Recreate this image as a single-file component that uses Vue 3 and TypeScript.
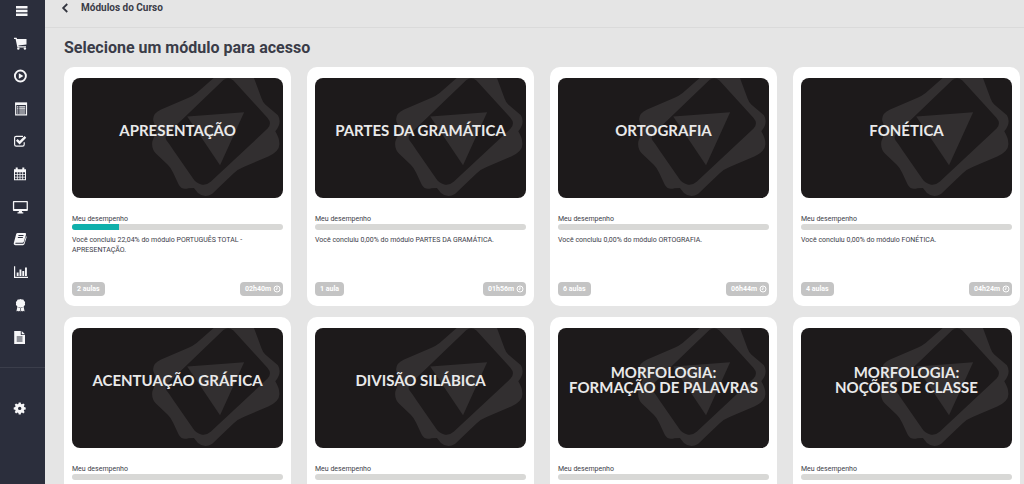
<script setup lang="ts">
interface Module {
  title: string[]
  course: string
  progress: number
  lessons: string
  duration: string
}

const menu: string[] = [
  'Menu', 'Loja', 'Aulas', 'Lista', 'Exercícios', 'Calendário',
  'Ao vivo', 'Apostilas', 'Relatórios', 'Certificados', 'Documentos',
]

const modules: Module[] = [
  { title: ['APRESENTAÇÃO'], course: 'PORTUGUÊS TOTAL - APRESENTAÇÃO', progress: 22.04, lessons: '2 aulas', duration: '02h40m' },
  { title: ['PARTES DA GRAMÁTICA'], course: 'PARTES DA GRAMÁTICA', progress: 0, lessons: '1 aula', duration: '01h56m' },
  { title: ['ORTOGRAFIA'], course: 'ORTOGRAFIA', progress: 0, lessons: '6 aulas', duration: '06h44m' },
  { title: ['FONÉTICA'], course: 'FONÉTICA', progress: 0, lessons: '4 aulas', duration: '04h24m' },
  { title: ['ACENTUAÇÃO GRÁFICA'], course: 'ACENTUAÇÃO GRÁFICA', progress: 0, lessons: '', duration: '' },
  { title: ['DIVISÃO SILÁBICA'], course: 'DIVISÃO SILÁBICA', progress: 0, lessons: '', duration: '' },
  { title: ['MORFOLOGIA:', 'FORMAÇÃO DE PALAVRAS'], course: 'FORMAÇÃO DE PALAVRAS', progress: 0, lessons: '', duration: '' },
  { title: ['MORFOLOGIA:', 'NOÇÕES DE CLASSE'], course: 'NOÇÕES DE CLASSE', progress: 0, lessons: '', duration: '' },
]

const percent = (value: number): string => value.toFixed(2).replace('.', ',') + '%'
</script>

<template>
  <div class="page">
    <nav class="sidebar" aria-label="Principal">
      <ul class="menu">
        <li v-for="(name, i) in menu" :key="name">
          <a href="#" class="item" :aria-label="name">
            <svg class="icon" viewBox="0 0 16 16" aria-hidden="true">
              <path v-if="i === 0" d="M4 3h11.500v2.500H4zM4 6.800h11.500v2.500H4zM4 10.600h11.500v2.500H4z" />
              <g v-else-if="i === 1">
                <path d="M2 1.700h2.600l.5 1.300h9.400v5.400L6.400 9.400l.2.900H14v1.200H5.400L3.600 3H2z" />
                <circle cx="6.300" cy="12.600" r="1.200" /><circle cx="12.900" cy="12.600" r="1.200" />
              </g>
              <g v-else-if="i === 2">
                <circle cx="8.400" cy="8" r="5.500" class="line thick" />
                <path d="M6.800 5.200 11.400 8l-4.600 2.800z" />
              </g>
              <g v-else-if="i === 3">
                <path d="M3.700 2.200h10.800v11.600H3.700z" class="line" />
                <path d="M3.200 1.700h11.800v2.200H3.200zM5 5.200h1.400v1.200H5zM7.200 5.200h6v1.200h-6zM5 7.300h1.400v1.200H5zM7.200 7.300h6v1.200h-6zM5 9.400h1.400v1.200H5zM7.200 9.400h6v1.200h-6zM5 11.400h1.400v1.200H5zM7.200 11.400h6v1.200h-6z" />
              </g>
              <g v-else-if="i === 4">
                <path d="M12.200 9.200v2.300a1.700 1.700 0 0 1-1.700 1.700H4.300a1.700 1.700 0 0 1-1.700-1.700V5a1.700 1.700 0 0 1 1.700-1.700h6.700" class="line" />
                <path d="m4.800 6.900 2.800 2.800 5.800-5.800" class="line heavy" />
              </g>
              <path v-else-if="i === 5" fill-rule="evenodd" d="M2 3.200h1.700V1.500h2v1.700h4.600V1.500h2v1.700H14v11H2zM3 6.200v1.900h1.900V6.200zm2.700 0v1.900h1.900V6.200zm2.700 0v1.900h1.900V6.200zm2.700 0v1.900H13V6.200zM3 8.800v1.900h1.900V8.800zm2.700 0v1.900h1.900V8.800zm2.700 0v1.900h1.900V8.800zm2.700 0v1.900H13V8.800zM3 11.400v1.900h1.900v-1.900zm2.700 0v1.900h1.900v-1.900zm2.700 0v1.900h1.900v-1.900zm2.700 0v1.900H13v-1.900z" />
              <path v-else-if="i === 6" fill-rule="evenodd" d="M1.800 1.900h13.200a.9.900 0 0 1 .9.900v8.300a.9.900 0 0 1-.9.900H9.900l.2 1.300h1.200v1.100H5.500v-1.100h1.200l.2-1.300H1.800a.9.900 0 0 1-.9-.9V2.800a.9.900 0 0 1 .9-.9zm.4 1.300v6.900h12.400V3.200z" />
              <path v-else-if="i === 7" fill-rule="evenodd" d="M5.600 2h7.200c1 0 1.500.7 1.200 1.600l-2.200 7.200c-.2.700-.7 1-1.400 1H3.700c-.7 0-.7 1 .2 1h7c.5 0 .9-.3 1.100-.8l2-6.800c.6.300.7.800.5 1.400l-2 6.500c-.3.700-.8 1.100-1.500 1.100H3.600c-1.400 0-2.200-1.100-1.800-2.300L4.200 3.100C4.400 2.400 4.900 2 5.600 2zm1 2.100-.3.900h5l.3-.9zM6 6l-.3.900h5L11 6z" />
              <path v-else-if="i === 8" d="M2 2.200h1.200v10.600h13V14H2zM4.700 8.400h1.900v3.700H4.700zM7.500 5.600h1.900v6.500H7.500zM10.300 6.900h1.900v5.200h-1.900zM13 3.500h1.900v8.600H13z" />
              <g v-else-if="i === 9" transform="translate(0 2)">
                <path d="m8.500 1 1.300.5 1.500.1.800 1.300 1 1.100-.2 1.400.2 1.400-1 1.100-.8 1.300-1.500.1-1.300.5-1.300-.5-1.500-.1-.8-1.300-1-1.100.2-1.400-.2-1.400 1-1.100.8-1.300 1.500-.1z" />
                <path d="m5.300 9 2.900 1v3.600l-1.100-.9-.9.900-.9-.9-.9.900zM11.700 9l-2.900 1v3.600l1.100-.9.900.9.900-.9.900.9z" />
              </g>
              <path v-else fill-rule="evenodd" d="M2.200 1.900h6.600v4.200H13v8.800H2.200zM9.700 1.900 13 5.200H9.700zM4.700 7.400v1h5.800v-1zm0 2.100v1h5.800v-1zm0 2.100v1h5.800v-1z" />
            </svg>
          </a>
        </li>
      </ul>
      <div class="settings">
        <a href="#" class="item" aria-label="Configurações">
          <svg class="icon" viewBox="0 0 16 16" aria-hidden="true">
            <path fill-rule="evenodd" d="M6.700 2.400h2l.3 1.500 1 .4 1.300-.9 1.400 1.400-.9 1.300.4 1 1.500.3v2l-1.500.3-.4 1 .9 1.300-1.400 1.400-1.300-.9-1 .4-.3 1.500h-2l-.3-1.500-1-.4-1.300.9L2.700 12l.9-1.300-.4-1-1.500-.3v-2l1.500-.3.4-1-.9-1.300 1.400-1.400 1.300.9 1-.4zM7.700 6.700a1.700 1.700 0 1 0 0 3.400 1.700 1.700 0 0 0 0-3.400z" />
          </svg>
        </a>
      </div>
    </nav>

    <div class="content">
      <header class="topbar">
        <button type="button" class="back" aria-label="Voltar">
          <svg viewBox="0 0 6 8" aria-hidden="true"><path d="M4.800.8 1.500 4l3.300 3.200" /></svg>
        </button>
        <span class="crumb">Módulos do Curso</span>
      </header>

      <main class="main">
        <h1 class="heading">Selecione um módulo para acesso</h1>
        <div class="grid">
          <article v-for="m in modules" :key="m.course" class="card">
            <a href="#" class="cover">
              <svg class="emblem" viewBox="0 0 630 360" preserveAspectRatio="xMaxYMid slice" aria-hidden="true">
                <path
                  fill-rule="evenodd"
                  d="M424 0 372 46Q362 54 348 60L266 95Q238 108 243 130L253 157 240 190Q236 212 252 228L286 260Q296 270 302 284L318 318Q327 337 348 330L364 329 376 344Q396 361 418 347L482 286Q496 273 514 266L586 235Q622 219 619 195Q619 180 607 160Q628 135 615 112L577 80Q570 73 566 62L543 0ZM452 7 284 168Q276 177 282 187Q292 200 304 218L362 302Q370 315 386 319Q402 322 414 311L584 152Q598 136 584 120L482 8Q466 -4 452 7Z"
                />
                <path d="M344 116 514 103 442 261Z" />
              </svg>
              <span class="cover-title">
                <template v-for="(line, n) in m.title" :key="line"><br v-if="n > 0" />{{ line }}</template>
              </span>
            </a>
            <div class="performance">
              <p class="text">Meu desempenho</p>
              <div class="track" role="progressbar" :aria-valuenow="m.progress" aria-valuemin="0" aria-valuemax="100" aria-label="Meu desempenho">
                <div class="fill" :style="{ width: m.progress + '%' }"></div>
              </div>
              <p v-if="m.lessons" class="text">Você concluiu {{ percent(m.progress) }} do módulo {{ m.course }}.</p>
            </div>
            <footer v-if="m.lessons" class="badges">
              <span class="badge">{{ m.lessons }}</span>
              <span class="badge time">{{ m.duration }}
                <svg viewBox="0 0 8 8" aria-hidden="true"><circle cx="4" cy="4" r="3" /><path d="M4 2.200V4.300H2.700" /></svg>
              </span>
            </footer>
          </article>
        </div>
      </main>
    </div>
  </div>
</template>

<style>
body {
  margin: 0;
  background: #e5e5e5;
}
</style>

<style scoped>
.page {
  display: flex;
  height: 100vh;
  overflow: hidden;
  background: #e5e5e5;
  color: #3a3c48;
  font-family: Roboto, "Liberation Sans", sans-serif;
}

.sidebar {
  flex: none;
  width: 45px;
  box-sizing: border-box;
  padding-top: 3px;
  background: #2b2e3c;
}

.menu {
  display: flex;
  flex-direction: column;
  justify-content: space-between;
  height: 342px;
  margin: 0;
  padding: 0;
  list-style: none;
}

.item {
  display: block;
  width: 16px;
  height: 16px;
  margin-left: 12px;
}

.icon {
  display: block;
  width: 16px;
  height: 16px;
  fill: #f6f6f8;
}

.line {
  fill: none;
  stroke: #f6f6f8;
  stroke-width: 1.2;
}

.thick {
  stroke-width: 1.9;
}

.heavy {
  stroke-width: 2.4;
}

.settings {
  margin-top: 22px;
  padding-top: 32px;
  border-top: 1px solid #3b3e4b;
}

.content {
  flex: 1;
  min-width: 0;
}

.topbar {
  display: flex;
  align-items: center;
  gap: 12px;
  height: 14px;
  padding: 1px 16px 12px;
  border-bottom: 1px solid #dadada;
}

.back {
  display: flex;
  padding: 0;
  border: 0;
  background: none;
}

.back svg {
  width: 8px;
  height: 10px;
  fill: none;
  stroke: #33353f;
  stroke-width: 1.4;
}

.crumb {
  font-size: 10px;
  font-weight: 700;
  line-height: 14px;
}

.main {
  padding: 11px 4px 0 19px;
}

.heading {
  margin: 0 0 10px;
  font-size: 16px;
  font-weight: 700;
  line-height: 18px;
}

.grid {
  display: grid;
  grid-template-columns: repeat(4, minmax(0, 1fr));
  gap: 11px 16px;
}

.card {
  display: flex;
  flex-direction: column;
  padding: 11px 8px 10px;
  border-radius: 10px;
  background: #fff;
}

.cover {
  position: relative;
  display: flex;
  align-items: center;
  justify-content: center;
  height: 120px;
  overflow: hidden;
  border-radius: 8px;
  background: #1d1a1b;
  color: #e9e9e9;
  text-decoration: none;
}

.emblem {
  position: absolute;
  inset: 0;
  width: 100%;
  height: 100%;
  fill: #322f30;
}

.cover-title {
  position: relative;
  padding-bottom: 16px;
  font-family: Lato, "Open Sans", sans-serif;
  font-size: 15px;
  font-weight: 700;
  line-height: 15px;
  text-align: center;
  white-space: nowrap;
}

.performance {
  min-height: 68px;
  padding-top: 16px;
}

.text {
  margin: 0;
  font-size: 7px;
  line-height: 10px;
}

.track {
  height: 6px;
  margin-bottom: 5px;
  overflow: hidden;
  border-radius: 3px;
  background: #d8d8d6;
}

.fill {
  height: 100%;
  background: #0fb0ab;
}

.badges {
  display: flex;
  justify-content: space-between;
}

.badge {
  display: flex;
  align-items: center;
  gap: 2px;
  padding: 0 5px;
  border-radius: 4px;
  background: #c4c4c4;
  color: #fff;
  font-size: 7px;
  font-weight: 700;
  line-height: 14px;
}

.time {
  padding-right: 2px;
}

.badge svg {
  width: 8px;
  height: 8px;
  fill: none;
  stroke: #fff;
}
</style>
